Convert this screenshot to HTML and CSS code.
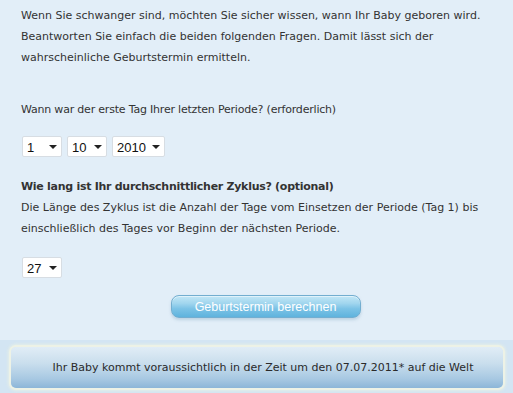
FILE: index.html
```html
<!DOCTYPE html>
<html lang="de">
<head>
<meta charset="utf-8">
<link rel="stylesheet" href="styles.css">
</head>
<body>
<div class="content">
  <p class="intro">Wenn Sie schwanger sind, möchten Sie sicher wissen, wann Ihr Baby geboren wird. Beantworten Sie einfach die beiden folgenden Fragen. Damit lässt sich der wahrscheinliche Geburtstermin ermitteln.</p>
  <p class="question">Wann war der erste Tag Ihrer letzten Periode? (erforderlich)</p>
  <div class="selects first">
    <span class="sel w40"><select><option>1</option></select></span>
    <span class="sel w40"><select><option>10</option></select></span>
    <span class="sel w53"><select><option>2010</option></select></span>
  </div>
  <p class="question2"><b>Wie lang ist Ihr durchschnittlicher Zyklus? (optional)</b><br>Die Länge des Zyklus ist die Anzahl der Tage vom Einsetzen der Periode (Tag 1) bis einschließlich des Tages vor Beginn der nächsten Periode.</p>
  <div class="selects">
    <span class="sel w40"><select><option>27</option></select></span>
  </div>
  <div class="btnrow"><button class="calc">Geburtstermin berechnen</button></div>
</div>
<div class="band">
  <div class="result">Ihr Baby kommt voraussichtlich in der Zeit um den 07.07.2011* auf die Welt</div>
</div>
</body>
</html>
```
FILE: styles.css
```css
html, body {
  margin: 0;
  padding: 0;
  background: #e2eef8;
  font-family: "DejaVu Sans", Verdana, sans-serif;
  color: #333;
}
.content {
  padding: 5px 21px 0 21px;
}
p {
  margin: 0;
  font-size: 11px;
  line-height: 21px;
}
.question {
  margin-top: 31px;
  letter-spacing: -0.2px;
}
.question2 b {
  letter-spacing: -0.28px;
}
.selects {
  display: flex;
  gap: 5px;
  margin-top: 18px;
  padding-left: 1px;
}
.selects.first {
  margin-top: 16px;
}
.sel {
  position: relative;
  display: block;
  height: 21px;
  background: #fff;
  border: 1px solid #d7dde3;
  box-sizing: border-box;
  border-radius: 2px;
}
.w40 { width: 40px; }
.w53 { width: 53px; }
.sel select {
  appearance: none;
  -webkit-appearance: none;
  border: 0;
  background: transparent;
  font-family: "Liberation Sans", Arial, sans-serif;
  font-size: 13px;
  color: #111;
  width: 100%;
  height: 19px;
  padding: 0 0 0 4px;
  margin: 0;
  outline: none;
}
.sel::after {
  content: "";
  position: absolute;
  right: 4px;
  top: 8px;
  border-left: 4px solid transparent;
  border-right: 4px solid transparent;
  border-top: 4px solid #222;
}
.question2 {
  margin-top: 19px;
}
.btnrow {
  display: flex;
  justify-content: center;
  margin-top: 17px;
  padding-left: 18px;
}
.calc {
  width: 190px;
  height: 23px;
  border: 1px solid #73aed0;
  border-radius: 8px;
  background: linear-gradient(#c2e6f6 0%, #a1d6ee 35%, #7cc3e6 60%, #5fb3dd 100%);
  color: #fff;
  font-family: "Liberation Sans", Arial, sans-serif;
  font-size: 12.5px;
  padding: 0;
  box-shadow: 0 2px 3px rgba(120, 160, 190, 0.35), inset 0 1px 0 rgba(255,255,255,0.5);
}
.band {
  margin-top: 22px;
  background: #d3e5f3;
  padding: 7px 10px 7px 11px;
}
.result {
  height: 41px;
  box-sizing: border-box;
  border-radius: 5px;
  background: linear-gradient(#e1edf6 0%, #c9deed 40%, #a7c8e2 78%, #8cb6d8 100%);
  box-shadow: 0 0 0 2px #edf2e6, 0 0 3px 3px rgba(240, 245, 225, 0.6);
  font-size: 11px;
  line-height: 41px;
  text-align: center;
  color: #2a2a2a;
  padding-left: 12px;
}
```
